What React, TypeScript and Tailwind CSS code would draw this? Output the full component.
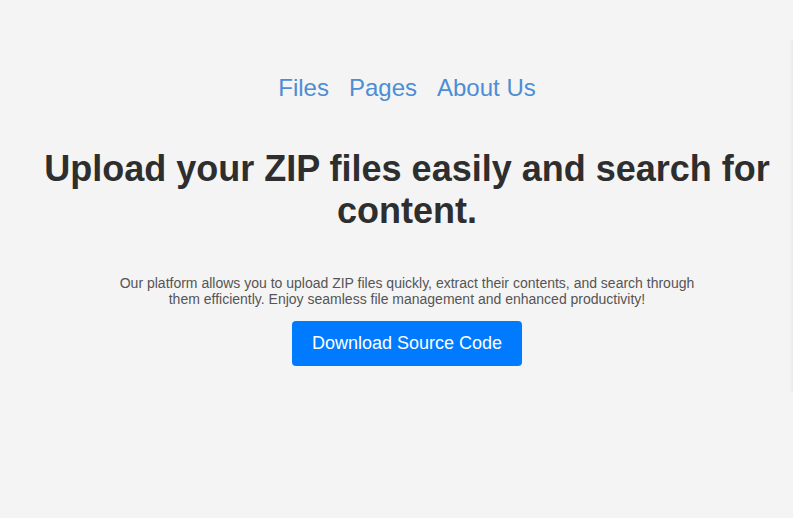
import React from 'react';

const App = () => {
	return (
		<div className="flex min-h-[518px] w-full bg-[#f4f4f4] font-['Liberation_Sans',Arial,sans-serif]">
			<main className="flex flex-1 flex-col items-center pl-[24px] text-center">
				<nav className="mt-[74px] flex gap-[20px] text-[24px] leading-[28px] text-[#4d8dd3]">
					<a href="#">Files</a>
					<a href="#">Pages</a>
					<a href="#">About Us</a>
				</nav>
				<h1 className="mt-[46px] text-[36px] font-bold leading-[42px] text-[#2e2e2e]">
					Upload your ZIP files easily and search for content.
				</h1>
				<p className="mt-[43px] max-w-[600px] text-[14px] leading-[16px] text-[#555555]">
					Our platform allows you to upload ZIP files quickly, extract their contents, and search through them efficiently. Enjoy seamless file management and enhanced productivity!
				</p>
				<button className="mt-[14px] h-[45px] w-[230px] rounded-[4px] bg-[#007bff] text-[18px] text-white">
					Download Source Code
				</button>
			</main>
			<div className="mt-[40px] h-[352px] w-[3px] bg-gradient-to-r from-[#f4f4f4] to-[#e9e9e9]" />
		</div>
	);
};

export default App;
